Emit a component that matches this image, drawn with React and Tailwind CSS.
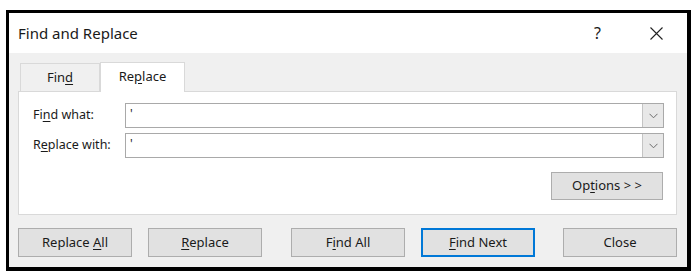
import React from "react";

const U = ({ children }) => <span className="underline underline-offset-[2px]">{children}</span>;

function Combo() {
  return (
    <div className="flex h-[25px] w-[539px] border border-[#a9a9a9] bg-white">
      <div className="flex-1 pl-[4px] text-[12px] leading-[20px] text-[#222]">'</div>
      <div className="flex w-[21px] items-center justify-center border-l border-[#c4c4c4] bg-[#e8e8e8]">
        <svg width="9" height="6" viewBox="0 0 9 6" fill="none">
          <path d="M0.5 0.8 L4.5 4.8 L8.5 0.8" stroke="#6b6b6b" strokeWidth="1" />
        </svg>
      </div>
    </div>
  );
}

function Btn({ children, className = "", primary = false }) {
  return (
    <div
      className={`flex h-[29px] w-[114px] items-center justify-center bg-[#e1e1e1] text-[13px] text-[#1a1a1a] ${
        primary ? "border-2 border-[#0078d7]" : "border border-[#adadad]"
      } ${className}`}
    >
      <span>{children}</span>
    </div>
  );
}

export default function App() {
  return (
    <div
      className="h-[280px] w-[698px] bg-white pl-[6px] pt-[10px]"
      style={{ fontFamily: '"Noto Sans", "Open Sans", sans-serif' }}
    >
      <div className="flex h-[261px] w-[685px] flex-col border-b-4 border-l-[3px] border-r-4 border-t-[3px] border-black bg-[#f0f0f0]">
        {/* Title bar */}
        <div className="flex h-[40px] items-center bg-white pl-[9px] text-[#1a1a1a]">
          <div className="text-[15px]">Find and Replace</div>
          <div className="ml-auto mr-[49px] text-[16px]">?</div>
          <div className="mr-[24px]">
            <svg width="13" height="13" viewBox="0 0 13 13">
              <path d="M0.5 0.5 L12.5 12.5 M12.5 0.5 L0.5 12.5" stroke="#222" strokeWidth="1.1" />
            </svg>
          </div>
        </div>

        {/* Body */}
        <div className="flex flex-1 flex-col px-[9px] pt-[9px]">
          <div className="flex h-[29px] items-end pl-[2px]">
            <div className="relative z-0 flex h-[28px] w-[80px] items-center justify-center border border-b-0 border-[#d9d9d9] bg-[#f0f0f0] text-[13px] text-[#1a1a1a]">
              <span>
                Fin<U>d</U>
              </span>
            </div>
            <div className="relative z-10 -mb-px flex h-[30px] w-[85px] items-center justify-center border border-b-0 border-[#d9d9d9] bg-white pb-[2px] text-[13px] text-[#1a1a1a]">
              <span>
                Re<U>p</U>lace
              </span>
            </div>
          </div>
          <div className="flex h-[124px] w-[659px] flex-col border border-[#d9d9d9] bg-white pl-[14px] pr-[12px] pt-[11px]">
            <div className="flex items-center">
              <div className="w-[92px] text-[12.5px] text-[#1a1a1a]">
                Fi<U>n</U>d what:
              </div>
              <Combo />
            </div>
            <div className="mt-[5px] flex items-center">
              <div className="w-[92px] text-[12.5px] text-[#1a1a1a]">
                R<U>e</U>place with:
              </div>
              <Combo />
            </div>
            <div className="mt-[14px] flex justify-end pr-[1px]">
              <div className="flex h-[28px] w-[112px] items-center justify-center border border-[#adadad] bg-[#e1e1e1] text-[13px] text-[#1a1a1a]">
                <span>
                  Op<U>t</U>ions &gt; &gt;
                </span>
              </div>
            </div>
          </div>

          <div className="mt-[13px] flex">
            <Btn>
              Replace <U>A</U>ll
            </Btn>
            <Btn className="ml-[16px]">
              <U>R</U>eplace
            </Btn>
            <Btn className="ml-[29px]">
              F<U>i</U>nd All
            </Btn>
            <Btn className="ml-[16px]" primary>
              <U>F</U>ind Next
            </Btn>
            <Btn className="ml-[28px]">Close</Btn>
          </div>
        </div>
      </div>
    </div>
  );
}
